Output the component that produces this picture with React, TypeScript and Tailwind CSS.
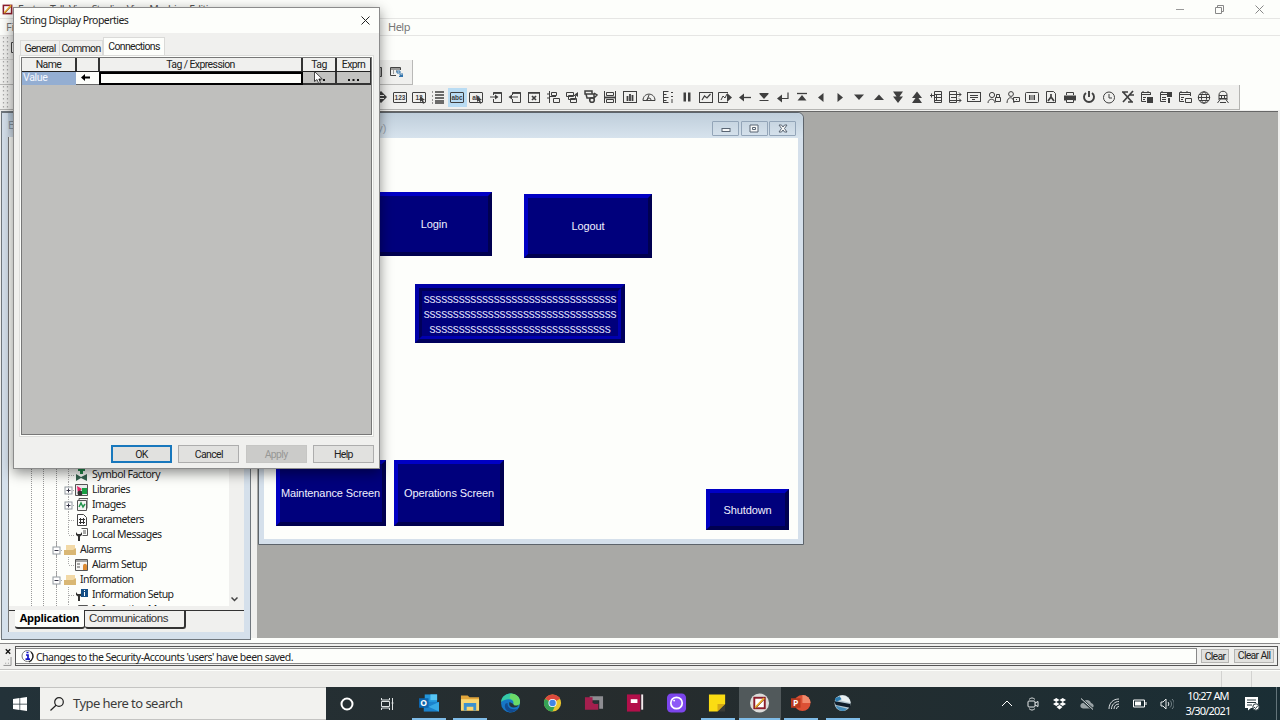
import React from 'react';

interface ToolIcon {
  name: string;
  active?: boolean;
  art: React.ReactNode;
}

const INK = '#3f3f3f';

const box = <rect x="0.5" y="2.5" width="13" height="10" rx="0.5" />;

const txt = (s: string) => (
  <text x="7" y="10" fontSize="6.5" fontWeight="bold" textAnchor="middle" fill={INK} stroke="none" fontFamily="Liberation Sans">
    {s}
  </text>
);

const solid = (d: string) => <path d={d} fill={INK} stroke="none" />;

const toolIcons: ToolIcon[] = [
  { name: 'diamond', art: solid('M7 1L13 7L7 13L1 7zM4 6h6v-1h-6zM4 9h6v-1h-6z') },
  { name: 'numeric', art: <>{box}{txt('123')}</> },
  { name: 'numeric-input', art: <>{box}{txt('12')}{solid('M8 6l5 4-2 .3 1.5 3-1.5.5-1.3-3L8 12z')}</> },
  { name: 'list', art: <><path d="M1 2h1M1 6h1M1 10h1M1 13h1" /><path d="M4 2h9M4 5h9M4 8h9M4 11h9M4 13h9" strokeWidth="1.6" /></> },
  { name: 'string', active: true, art: <>{box}{txt('abc')}</> },
  { name: 'string-input', art: <>{box}{txt('ab')}{solid('M8 6l5 4-2 .3 1.5 3-1.5.5-1.3-3L8 12z')}</> },
  { name: 'goto', art: <><path d="M4.5 5V2.5h8v10h-8V9M1 7h6" /><path d="M4.5 3h8" strokeWidth="1.8" />{solid('M6 4.5L9.5 7L6 9.5z')}</> },
  { name: 'return', art: <><path d="M4.5 5V2.5h8v10h-8V9M3 7h7" /><path d="M4.5 3h8" strokeWidth="1.8" />{solid('M4 4.5L.5 7L4 9.5z')}</> },
  { name: 'close', art: <><rect x="1.5" y="2.5" width="11" height="10" /><path d="M2 3h10M5 6l4 4M9 6l-4 4" strokeWidth="1.7" /></> },
  { name: 'list-goto', art: <><path d="M3.5 1v12M1 4h3M1 8h3M5.5 2.5h5v3h-5zM7.5 8.5h6v4h-6zM4 6.5h6" /></> },
  { name: 'screen-goto', art: <><path d="M1.5 2.5h7v4h-7zM3.5 5.5h7v4h-7zM5.5 8.5h6v4h-6z" />{solid('M13 2v5L9.5 4.5z')}</> },
  { name: 'screen-swap', art: <><path d="M1 1h7v3H1zM2 4h8v4H3zM10 3l3 2-3 3" strokeWidth="1.5" /><circle cx="8" cy="10" r="2.3" strokeWidth="1.6" /></> },
  { name: 'pump', art: <><path d="M1.5 1v12M12.5 1v12M3.5 2.5h7v3h-7zM3.5 9.5h7v3h-7z" /><path d="M2 7.500h10" strokeWidth="1.8" /></> },
  { name: 'bars', art: <><rect x="0.5" y="1.5" width="13" height="11" /><path d="M4.5 11V6M7 11V4M9.5 11V5" strokeWidth="1.8" /></> },
  { name: 'gauge', art: <path d="M1 10.5C1 2 13 2 13 10.5zM5 10l2-5M9 10a2 2 0 0 0-4 0" /> },
  { name: 'scale', art: <path d="M2.5 1v12M2.5 1.5h5M2.5 4.5h3M2.5 7.5h5M2.5 10.5h3M2.5 12.5h5M10 2.5h2M10 6.5h2M11 9v4" /> },
  { name: 'pause', art: solid('M3.5 2.5h2.5v9h-2.5zM8 2.5h2.5v9H8z') },
  { name: 'trend', art: <><rect x="0.5" y="2.5" width="13" height="10" /><path d="M3 10l2.5-4L8 8l3.5-4" strokeWidth="1.2" /></> },
  { name: 'trend-next', art: <><path d="M10 2.5H.5v10H10M3 10l2-4 2 2 2-4" />{solid('M9 3l5 4.500-5 4.500z')}</> },
  { name: 'arrow-left', art: <><path d="M5 7.5h8" strokeWidth="1.3" />{solid('M6 3.5v8L1 7.500z')}</> },
  { name: 'to-bottom', art: <>{solid('M2.5 4h9L7 9z')}<path d="M2.5 10.5h9M2.5 3.5h9" /></> },
  { name: 'enter', art: <><path d="M4 8.5h8V2.5" strokeWidth="1.2" />{solid('M6 4.500v8L1 8.500z')}</> },
  { name: 'to-top', art: <>{solid('M2.5 10.5h9L7 5z')}<path d="M2 3.5h10" strokeWidth="1.3" /></> },
  { name: 'left', art: solid('M9.5 3v9L4 7.5z') },
  { name: 'right', art: solid('M4.5 3v9L10 7.5z') },
  { name: 'down', art: solid('M2 4.5h10L7 10z') },
  { name: 'up', art: solid('M2 10h10L7 4.500z') },
  { name: 'page-down', art: solid('M2 1.5h10L8.5 6.5H12L7 13L2 6.5h3.5z') },
  { name: 'page-up', art: solid('M2 13h10L8.5 8H12L7 1.500L2 8h3.5z') },
  { name: 'recipe', art: <><path d="M5.5 1.5h7v11h-7zM6 4.500h6M6 7.500h6M6 10.500h6M1 5.500h4M2.500 3.500v4" /><path d="M7.5 4v7" /></> },
  { name: 'recipe-out', art: <path d="M1.5 1.5h7v11h-7zM2 4.500h11M3 7.500h5M2 10.500h11M11 2.500l2 2-2 2M11 8.500l2 2-2 2" /> },
  { name: 'message', art: <><rect x="0.5" y="2.5" width="13" height="9" /><path d="M3 5.500h8M3 7.500h8M5 9.500h3" /></> },
  { name: 'user-lock', art: <><circle cx="5" cy="5" r="2.6" /><path d="M1 13c0-5 7-5 7 0M8.500 7.500h5v4h-5zM9.500 7V4.5h3V7" /></> },
  { name: 'user-key', art: <><circle cx="5" cy="4" r="2.4" /><path d="M1 13c0-7 7-7 7 0M7.500 7.500h6v4h-6zM10 9.500h1" /></> },
  { name: 'display', art: <><rect x="0.5" y="2.5" width="13" height="10" rx="1" /><path d="M4.5 5v5M6 5v5M8 5v5M9.5 5v5" /></> },
  { name: 'report', art: <><path d="M2.5 1.5h7l2 2v9h-9z" /><path d="M7 4v3M4 11l3-4 3 4" strokeWidth="1.7" /></> },
  { name: 'print', art: <>{solid('M1 5.5h12v5H1z')}<path d="M3.5 5V2.5h7V5M3.5 9.5h7v3h-7z" fill="#eeeeec" /></> },
  { name: 'power', art: <path d="M4 3a5 5 0 1 0 6 0M7 1v6" strokeWidth="1.9" /> },
  { name: 'clock', art: <><circle cx="7" cy="7.500" r="5.5" /><path d="M7 4V8h3" /></> },
  { name: 'language', art: <path d="M2 2l9 10M12 1L2 12M1 2h6M8 5h5M7 12h5" strokeWidth="1.7" /> },
  { name: 'tag-a', art: <><path d="M10.500 5V2.5h-9v9H6M2 4.5h9M3 1v2M8 1v2M3 7.500h3M3 9.500h2" />{solid('M7 7h6v6H7z')}</> },
  { name: 'tag-b', art: <><path d="M9 2.5H1.5v9H7M2 4.5h7M3 1v2M3 7.500h4M3 9.500h4" />{solid('M8 2h5v5H8zM9 8h2v5H9z')}</> },
  { name: 'tag-c', art: <path d="M12.500 6V2.5h-11v9H6M2 4.5h10M3 1v2M9 1v2M3 7.500h3M3 9.500h2M7.500 8.500h6v4h-6z" /> },
  { name: 'globe', art: <><circle cx="7" cy="7.500" r="5.7" /><ellipse cx="7" cy="7.500" rx="2.6" ry="5.7" /><path d="M1 7.500h12M2 4.500h10M2 10.500h10" /></> },
  { name: 'robot', art: <path d="M3 10V5C3 0 11 0 11 5v5M3 5.500h8M3 8.500h8M5.500 5v3M8.500 5v3M1.5 13l3-4h5l3 4M4 12.500h6" /> },
];

const Tool = ({ icon }: { icon: ToolIcon }) => (
  <div className={`flex h-[19px] w-[19.17px] shrink-0 items-center justify-center ${icon.active ? 'bg-[#b9dcf3]' : ''}`}>
    <svg width="14" height="14" viewBox="0 0 14 14" fill="none" stroke={INK} strokeWidth="1">
      {icon.art}
    </svg>
  </div>
);

interface TreeItem {
  label: string;
  level: number;
  expand?: '+' | '-';
  last?: boolean;
  art: React.ReactNode;
}

const folder = (
  <>
    <path d="M3 2h9v9H3z" fill="#f2d9a6" />
    <path d="M1 12V7h9l3-2v7z" fill="#d9b774" />
  </>
);

const wrench = <path d="M1 4v3l2 1.5V13h2V8.5L7 7V4L5.5 6h-3z" fill="#333" />;

const treeItems: TreeItem[] = [
  { label: 'Symbol Factory', level: 1, art: <><path d="M3 1h7v2H8v3H5V3H3z" fill="#238a4c" /><path d="M1 6l5 3 6-3v7l-6-3-5 3z" fill="#356450" /></> },
  { label: 'Libraries', level: 1, expand: '+', art: <><path d="M.5 1.5h12v11H.5z" fill="#e9eeee" stroke="#555" /><path d="M2 3l5 3-4 4z" fill="#e52468" /><circle cx="5" cy="10" r="2.5" fill="#333" /><path d="M7 5h5v6H7z" fill="#19a044" /></> },
  { label: 'Images', level: 1, expand: '+', art: <><path d="M2.5 2.5h9v10h-9zM4 2V.5h9v10" fill="#f5f5f3" stroke="#555" /><path d="M4 9l2-4 2 4 2-3" fill="none" stroke="#21944c" strokeWidth="1.5" /></> },
  { label: 'Parameters', level: 1, art: <><path d="M2.5 1.5h6l3 3v8h-9z" fill="#fff" stroke="#444" /><path d="M4 6.500h6M4 9.500h6M5.500 5v6M8.5 5v6" stroke="#333" /></> },
  { label: 'Local Messages', level: 1, last: true, art: <>{wrench}<path d="M6.5.5h6v7h-5M8 3h3M8 5h3" fill="none" stroke="#555" /></> },
  { label: 'Alarms', level: 0, expand: '-', art: folder },
  { label: 'Alarm Setup', level: 1, last: true, art: <><path d="M.5 1.5h12v11H.5zM.5 3h12M2 6h3M2 9h3" fill="#f7f7f5" stroke="#555" /><path d="M8 12V8c0-3 4-3 4 0v4z" fill="#dc8a32" /></> },
  { label: 'Information', level: 0, expand: '-', art: folder },
  { label: 'Information Setup', level: 1, art: <>{wrench}<path d="M6 1h7v8H6z" fill="#154f86" /><path d="M9.5 2v1M9.5 4v4" stroke="#fff" /></> },
  { label: 'Information Messages', level: 1, art: <path d="M3.5 2.5h9v10h-9zM5 5h6" fill="none" stroke="#555" /> },
];

const TreeRow = ({ item }: { item: TreeItem }) => (
  <div className={`flex h-[15px] shrink-0 items-center ${item.level === 1 ? 'pl-[53px]' : 'pl-[41px]'}`}>
    <svg width="13" height="15" viewBox="0 0 13 15" fill="none" stroke="#aaa" strokeWidth="1">
      <path d={item.level === 1 && item.last ? 'M6.5 0V8' : 'M6.5 0V15'} strokeDasharray="1 1" />
      <path d="M7 8.5h6" strokeDasharray="1 1" />
      {item.expand && (
        <>
          <rect x="3" y="5" width="7" height="7" fill="#fff" stroke="#92999f" />
          <path d={item.expand === '+' ? 'M4.5 8.5h4M6.5 6.5v4' : 'M4.5 8.5h4'} stroke="#334" />
        </>
      )}
    </svg>
    <svg width="13" height="13" viewBox="0 0 13 13" className="mr-[4px]">
      {item.art}
    </svg>
    <span className="text-[10.5px] leading-[15px] tracking-[-0.53px] whitespace-nowrap text-[#222]">{item.label}</span>
  </div>
);

const MdiButton = ({ children }: { children: React.ReactNode }) => (
  <div className="flex h-[15px] w-[27px] items-center justify-center rounded-[1px] border border-[#93a5b8]">
    <svg width="10" height="9" viewBox="0 0 10 9" fill="#f7f8f8" stroke="#596573">
      {children}
    </svg>
  </div>
);

const HmiButton = ({ label, className }: { label: string; className: string }) => (
  <div
    className={`absolute flex items-center justify-center border-4 border-t-[#0000c4] border-r-[#000050] border-b-[#000050] border-l-[#0000c4] bg-[#00007c] text-[11px] tracking-[-0.1px] whitespace-nowrap text-[#f0f0ff] ${className}`}
  >
    {label}
  </div>
);

const DisplayWindow = () => (
  <div className="absolute top-0 left-px flex h-[433px] w-[546px] flex-col rounded-t-md border border-[#5d646b] bg-[#d5e0eb] px-[5px] pb-[5px] font-['Liberation_Sans',sans-serif]">
    <div className="-mx-[5px] flex h-[25px] shrink-0 items-center justify-end gap-[1.5px] rounded-t-md bg-linear-to-b from-[#bfcedb] to-[#d7e3ed] pt-[6px] pr-[7px]">
      <span className="mr-[324px] text-[11px] text-[#96a1aa]">Logon - /Test/ (Display)</span>
      <MdiButton><rect x="1" y="4.5" width="8" height="3" /></MdiButton>
      <MdiButton><path d="M1 1h8v7H1z" /><path d="M3.5 3.5h3v2h-3z" /></MdiButton>
      <MdiButton><path d="M1 1h2.5L5 3l1.5-2H9L6.5 4.5 9 8H6.5L5 6 3.5 8H1l2.5-3.5z" /></MdiButton>
    </div>
    <div className="relative flex-1 bg-[#fdfefb]">
      <HmiButton label="Login" className="top-[54px] left-[112px] h-[64px] w-[116px]" />
      <HmiButton label="Logout" className="top-[56px] left-[260px] h-[64px] w-[128px]" />
      <div className="absolute top-[146px] left-[151px] h-[59px] w-[210px] border-4 border-t-[#0000a8] border-r-[#00005c] border-b-[#00005c] border-l-[#0000a8]">
        <div className="flex h-full flex-col justify-center border-3 border-t-[#000058] border-r-[#0000b0] border-b-[#0000b0] border-l-[#000058] bg-[#00007c] pt-[2px] text-center text-[12px] leading-[15px] tracking-[-0.16px] whitespace-nowrap text-[#e0e0fb]">
          <div className="-mx-2">{'s'.repeat(33)}</div>
          <div className="-mx-2">{'s'.repeat(33)}</div>
          <div className="-mx-2">{'s'.repeat(31)}</div>
        </div>
      </div>
      <HmiButton label="Maintenance Screen" className="top-[322px] left-[12px] h-[66px] w-[110px] pr-px" />
      <HmiButton label="Operations Screen" className="top-[322px] left-[130px] h-[66px] w-[110px]" />
      <HmiButton label="Shutdown" className="top-[351px] left-[442px] h-[41px] w-[83px] pt-px" />
    </div>
  </div>
);

const DialogButton = ({ label, className = '' }: { label: string; className?: string }) => (
  <button className={`h-[18px] w-[61px] border text-[10.5px] leading-[15px] ${className || 'border-[#adadad] bg-[#e1e1df]'}`}>
    {label}
  </button>
);

const Dots = () => (
  <svg width="11" height="2" viewBox="0 0 11 2" fill="#111"><path d="M0 0h2v2H0zM4.5 0h2v2h-2zM9 0h2v2H9z" /></svg>
);

const PropertiesDialog = () => (
  <div className="absolute top-[7px] left-[13px] flex h-[462px] w-[367px] flex-col border border-[#8b8b8b] bg-[#f0f0ee] font-[Roboto,sans-serif] tracking-[-0.65px] text-[#222] shadow-[0_4px_12px_rgba(0,0,0,0.45)]">
    <div className="flex h-[25px] items-center justify-between bg-[#fdfefb] pr-[9px] pl-[6px]">
      <span className="font-['Noto_Sans',sans-serif] text-[10.5px] tracking-[-0.54px]">String Display Properties</span>
      <svg width="9" height="9" viewBox="0 0 9 9" stroke="#222"><path d="M.5.5l8 8M8.5.5l-8 8" /></svg>
    </div>
    <div className="flex h-[22px] items-end pl-[6px] text-[10.5px] leading-[15px]">
      <div className="h-[15px] w-[40px] border border-b-0 border-[#dadad8] text-center">General</div>
      <div className="h-[15px] w-[43px] border border-b-0 border-l-0 border-[#dadad8] text-center">Common</div>
      <div className="h-[18px] w-[62px] border border-b-0 border-[#dadad8] bg-[#fdfefb] text-center leading-[18px]">Connections</div>
    </div>
    <div className="ml-[5px] h-[382px] w-[355px] border border-[#dcdcda] bg-[#fdfefb] p-px">
      <div className="h-full border border-[#777] bg-[#bfbfbd]">
        <div className="flex h-[14px] border-b border-[#222] bg-[#f0f0ee] text-center text-[10.5px] leading-[13px] tracking-[-0.6px]">
          <div className="w-[55px] border-r-2 border-[#333]">Name</div>
          <div className="w-[23px] border-r-2 border-[#333]" />
          <div className="w-[203px] border-r-2 border-[#333]">Tag / Expression</div>
          <div className="w-[34px] border-r-2 border-[#333]">Tag</div>
          <div className="w-[34px] border-r border-[#333]">Exprn</div>
        </div>
        <div className="flex h-[13px] text-[10.5px] leading-[12px]">
          <div className="w-[54px] bg-[#94aed2] pl-px tracking-[-0.3px] text-[#f5f8ff]">Value</div>
          <div className="flex w-[23px] items-center justify-center border-b border-[#666] bg-[#fdfefb] pr-[4px] pb-[2px]">
            <svg width="9" height="7" viewBox="0 0 9 7"><path d="M0 3.5L4 0v2.5h5v2H4V7z" fill="#000" /></svg>
          </div>
          <div className="w-[204px] border-2 border-black bg-[#fdfefb]" />
          <div className="flex w-[34px] items-center justify-center border-r-2 border-b-2 border-[#333] bg-[#c3c3c1] pt-1">
            <Dots />
          </div>
          <div className="flex w-[34px] items-center justify-center border-r border-b-2 border-[#333] bg-[#c3c3c1] pt-1">
            <Dots />
          </div>
        </div>
      </div>
    </div>
    <div className="flex gap-[6.3px] pt-[8px] pl-[97px]">
      <DialogButton label="OK" className="border-2 border-[#1878bd] bg-[#e1e1df] leading-[13px]" />
      <DialogButton label="Cancel" />
      <DialogButton label="Apply" className="border-[#c6c6c4] bg-[#cbcbc9] text-[#989896]" />
      <DialogButton label="Help" />
    </div>
  </div>
);

const StudioMark = ({ size }: { size: number }) => (
  <svg width={size} height={size} viewBox="0 0 12 12">
    <rect x="1.5" y="1.5" width="9" height="9" fill="#fff" stroke="#8c1e2c" strokeWidth="1.7" />
    <path d="M2.5 10L10 1.5" stroke="#e9ac2a" strokeWidth="1.9" />
    <path d="M2.5 10.5L10.5 2.5" stroke="#70302a" strokeWidth="0.5" />
  </svg>
);

interface TaskApp {
  name: string;
  open?: boolean;
  active?: boolean;
  art: React.ReactNode;
}

const letter = (s: string, x: number) => (
  <text x={x} y="13.5" fontSize="9" fontWeight="bold" textAnchor="middle" fill="#fff" fontFamily="Open Sans">{s}</text>
);

const taskApps: TaskApp[] = [
  { name: 'Outlook', open: true, art: <><path d="M6 1h13v11H6z" fill="#2397dc" /><path d="M12 1h7v6h-7z" fill="#57c5f4" /><path d="M5 9h16v10H5z" fill="#1b82cc" /><path d="M21 9v10L10 14z" fill="#36a9e6" /><path d="M0 5h10v10H0z" fill="#0d65ae" />{letter('O', 5)}</> },
  { name: 'Explorer', open: true, art: <><path d="M1 2h7l2 2h10v14H1z" fill="#e3a63b" /><path d="M1 6h19v12H1z" fill="#fad774" /><path d="M4 18v-8h13v8h-3v-4H7v4z" fill="#3d91cf" /></> },
  { name: 'Edge', art: <><circle cx="10" cy="10" r="10" fill="#1676c6" /><path d="M0 9C1-3 20-3 20 9c0 5-7 5-7 2 2-5-7-7-13-2z" fill="#35c9a5" /><path d="M10 0c6 0 10 4 10 9 0 5-7 5-7 2 1-3-1-5-4-6z" fill="#6bda68" /><path d="M7 10c-1 5 5 8 10 6-3 5-12 5-13-2 0-3 1-4 3-4z" fill="#124b91" /><path d="M9 9c-2 5 3 7 8 5l3-4c-2 4-7 3-7 1z" fill="#26343a" /></> },
  { name: 'Chrome', art: <><circle cx="10" cy="10" r="9" fill="#e9c42e" /><path d="M10 10L2.2 5.5A9 9 0 0 1 17.8 5.5z" fill="#dd4a3d" /><path d="M2.2 5.5A9 9 0 0 0 10 19l3-7z" fill="#35a255" /><path d="M10 5.5h8l-1-2H8z" fill="#dd4a3d" /><circle cx="10" cy="10" r="4.3" fill="#fff" /><circle cx="10" cy="10" r="3.4" fill="#4285e6" /></> },
  { name: 'Linx', art: <><path d="M6 3h14v13h-4V7H6z" fill="#8d8d92" /><path d="M1 4h8v6h6v7H1z" fill="#a41f4e" /><path d="M10 8h5v3h-5z" fill="#2a3337" /></> },
  { name: 'Logix', art: <><path d="M1 1h14v18H1z" fill="#b30f4a" /><path d="M16 1h2v16h-2z" fill="#f4e8ec" /><path d="M5 6h7v4H5z" fill="#fff" /></> },
  { name: 'Capture', art: <><rect width="20" height="20" rx="4.5" fill="#7c45ec" /><circle cx="10" cy="10" r="6" fill="#8e5af7" stroke="#fff" strokeWidth="1.8" /><circle cx="7.5" cy="7.5" r="1" fill="#fff" /></> },
  { name: 'Notes', open: true, art: <><path d="M1 1h17v10l-8 8H1z" fill="#fbdc13" /><path d="M18 11v8h-8z" fill="#3b3c36" /><path d="M10 11h8l-8 8z" fill="#d5a916" /></> },
  { name: 'Studio', open: true, active: true, art: <><circle cx="10" cy="10" r="10" fill="#dddcda" /><rect x="4.5" y="4.5" width="11" height="11" fill="#fff" stroke="#8c1e2c" strokeWidth="2" /><path d="M5.5 15L15 5" stroke="#e9ac2a" strokeWidth="2" /><path d="M6 15.5L15.5 6" stroke="#70302a" strokeWidth=".6" /></> },
  { name: 'PowerPoint', open: true, art: <><circle cx="12" cy="10" r="8.5" fill="#dc5034" /><path d="M12 1.5A8.5 8.5 0 0 1 20.5 10H12z" fill="#f18a6c" /><path d="M0 5h10v10H0z" fill="#b93a20" />{letter('P', 5)}</> },
  { name: 'Viewer', open: true, art: <><circle cx="10" cy="10" r="8.5" fill="#b4c5ce" /><path d="M3 5C9-1 18 3 18.5 10L10 8z" fill="#e9f0f2" /><path d="M1 8l17 3v4L3 12z" fill="#101d2a" /><path d="M3 13l12 3c-4 4-10 3-12-3z" fill="#468dba" /><path d="M2 5l5-2 2 3-6 3z" fill="#2e7eb1" /></> },
];

const Taskbar = () => (
  <div className="flex h-[33px] shrink-0 items-stretch bg-linear-to-r from-[#233239] via-[#262c2d] to-[#1a2e35] font-['Noto_Sans',sans-serif] text-white">
    <div className="flex w-[40px] items-center justify-center">
      <svg width="14" height="14" viewBox="0 0 14 14" fill="#fff"><path d="M0 2l6.5-1v5.7H0zM7.2.9L14 0v6.7H7.2zM0 7.4h6.5V13L0 12zM7.2 7.4H14V14l-6.8-.9z" /></svg>
    </div>
    <div className="flex w-[286px] items-center gap-[9px] border-t border-b border-[#c4c4c2] bg-[#f2f2ef] pl-[10px] text-[#3c3c3c]">
      <svg width="14" height="14" viewBox="0 0 14 14" fill="none" stroke="#222" strokeWidth="1.2"><circle cx="9" cy="5" r="4.3" /><path d="M6 8.2L.5 13.5" /></svg>
      <span className="text-[13px] tracking-[-0.54px]">Type here to search</span>
    </div>
    <div className="flex w-[41px] items-center justify-center">
      <svg width="14" height="14" viewBox="0 0 14 14" fill="none" stroke="#fff" strokeWidth="2"><circle cx="7" cy="7" r="5.5" /></svg>
    </div>
    <div className="flex w-[41px] items-center justify-center">
      <svg width="15" height="14" viewBox="0 0 15 14" fill="none" stroke="#dfe3e4"><path d="M1.5 1v2h8V1M1.5 13v-2h8v2M1.5 4.5h8v5h-8zM12.5 1v12M11.5 6h2" /></svg>
    </div>
    {taskApps.map((app) => (
      <div key={app.name} className={`flex w-[41.4px] items-center justify-center ${app.active ? 'bg-[#51595b]' : ''}`}>
        <div className="relative flex h-full w-[34px] items-center justify-center pb-px">
          <svg width="20" height="20" viewBox="0 0 21 20">{app.art}</svg>
          {app.open && <div className={`absolute bottom-0 h-[2px] bg-[#7fbce8] ${app.active ? 'w-[41px]' : 'w-[34px]'}`} />}
        </div>
      </div>
    ))}
    <div className="ml-auto flex items-center">
      <div className="flex w-[27px] justify-center">
        <svg width="12" height="7" viewBox="0 0 12 7" fill="none" stroke="#fff"><path d="M1 6l5-5 5 5" /></svg>
      </div>
      <div className="flex w-[26px] justify-center">
        <svg width="12" height="14" viewBox="0 0 12 14" fill="none" stroke="#e8ebec"><rect x="1" y="4" width="7" height="6" rx="1" /><path d="M8 6l3-1.5v5L8 8M2 2.5c2-2 4-2 6 0M2 11.5c2 2 4 2 6 0" /></svg>
      </div>
      <div className="flex w-[27px] justify-center">
        <svg width="13" height="12" viewBox="0 0 13 12" fill="#fff"><path d="M3.3 0L6.5 2 3.3 4 0 2zM9.7 0L13 2 9.7 4 6.5 2zM3.3 4L6.5 6 3.3 8 0 6zM9.7 4L13 6 9.7 8 6.5 6zM6.5 7l3 2-3 2.5-3-2.5z" /></svg>
      </div>
      <div className="flex w-[27px] justify-center">
        <svg width="14" height="12" viewBox="0 0 14 12"><path d="M3 10.5C-1 10 0 5 3 5c1-4 7-4 8 0 4 1 3 5.5 0 5.5z" fill="#9aa3a6" /><path d="M1 1l12 10.5" stroke="#1f2d32" strokeWidth="2.5" /><path d="M1 .5l12 11" stroke="#dfe4e5" /></svg>
      </div>
      <div className="flex w-[27px] justify-center">
        <svg width="12" height="12" viewBox="0 0 12 12" fill="none" stroke="#d9dddf"><path d="M1 11C1 5 5 1 11 1M3.5 11c0-4 3-7.5 7.5-7.5M6 11c0-3 2-5 5-5M8.5 11c0-1.5 1-2.5 2.5-2.5" /></svg>
      </div>
      <div className="flex w-[26px] justify-center">
        <svg width="14" height="9" viewBox="0 0 14 9" fill="none" stroke="#fff"><path d="M.5 1h11v7H.5zM13 3v3" /><path d="M2 2.5h6v4H2z" fill="#fff" stroke="none" /></svg>
      </div>
      <div className="flex w-[27px] justify-center">
        <svg width="14" height="12" viewBox="0 0 14 12" fill="none" stroke="#e8ebec"><path d="M1 4h2l3-3v10L3 8H1zM8 4c1 1 1 3 0 4" /><path d="M10 2.5c2 2 2 5 0 7M12 1c3 3 3 7 0 10" stroke="#77858a" /></svg>
      </div>
      <div className="ml-[3px] w-[50px] pb-[2px] text-center text-[11px] leading-[15px] tracking-[-0.8px] whitespace-nowrap">
        <div>10:27 AM</div>
        <div>3/30/2021</div>
      </div>
      <div className="flex w-[39px] justify-center">
        <svg width="15" height="14" viewBox="0 0 15 14"><path d="M0 0h13v11H6l-3 2.5V11H0z" fill="#fff" /><path d="M2 3h9M2 5.5h9M2 8h5" stroke="#2b3b41" /><circle cx="11" cy="10" r="3.2" fill="#fff" stroke="#2b3b41" /><path d="M9 10l1.5 1.5L13 8.5" fill="none" stroke="#2b3b41" /></svg>
      </div>
      <div className="ml-[4px] h-[33px] w-[4px] border-l border-[#63747a]" />
    </div>
  </div>
);

const Grip = () => (
  <svg width="8" height="22" viewBox="0 0 8 22" className="ml-[2px] shrink-0" fill="none" stroke="#aaa" strokeWidth="1.2">
    <path d="M1.5 0v22M5.5 0v22" strokeDasharray="1.5 2.5" />
  </svg>
);

const App: React.FC = () => {
  return (
    <div className="relative flex h-[720px] w-[1280px] flex-col overflow-hidden bg-[#fdfefb] font-['Noto_Sans',sans-serif] text-[11px] text-[#222]">
      {/* Title bar */}
      <div className="flex h-[19px] shrink-0 items-center border-b border-[#e6e6e4] pl-[2px]">
        <StudioMark size={11} />
        <span className="ml-[5px] pt-[2px] text-[10.5px] tracking-[-0.6px] text-[#555]">FactoryTalk View Studio - View Machine Edition</span>
        <div className="ml-auto flex items-center gap-[31px] pr-[16px]">
          <svg width="8" height="9" viewBox="0 0 8 9" stroke="#999"><path d="M0 4.5h8" /></svg>
          <svg width="9" height="9" viewBox="0 0 9 9" fill="none" stroke="#888"><path d="M.5 2.5h6v6h-6zM2.5 2V.5h6v6H7" /></svg>
          <svg width="9" height="9" viewBox="0 0 9 9" stroke="#888"><path d="M.5.5l8 8M8.5.5l-8 8" /></svg>
        </div>
      </div>

      {/* Menu bar */}
      <div className="flex h-[17px] shrink-0 items-center border-b border-[#e6e6e4] pl-[6px] text-[#777]">
        <span className="w-[382px] tracking-[-0.3px]">File</span>
        <span className="tracking-[-0.5px]">Help</span>
      </div>

      {/* Toolbars */}
      <div className="flex h-[24px] w-[300px] shrink-0 items-center border-b border-[#d6d6d4] bg-[#f0f0ee]">
        <Grip />
        <svg width="10" height="11" viewBox="0 0 10 11" className="ml-px"><path d="M.5.5h9v10h-9z" fill="#fff" stroke="#444" /><path d="M3 4h6v4H3z" fill="#b52c3d" /></svg>
      </div>
      <div className="flex h-[25px] w-[413px] shrink-0 items-center border-r border-b border-[#b9b9b7] bg-[#f0f0ee]">
        <Grip />
        <div className="ml-auto flex items-center gap-[8px] pr-[9px]">
          <svg width="12" height="12" viewBox="0 0 12 12" fill="#aaa" stroke="#444"><path d="M.5 1.5h11v9H.5z" /></svg>
          <svg width="13" height="12" viewBox="0 0 13 12" fill="none" stroke="#444">
            <path d="M10.5 4V1.5h-10v8H6M1 3h9M3 5h1M6 5h1M3 7h1" />
            <path d="M7 5h3v2H7zM10 8h3v1.5h-3zM9 10.5h4" stroke="#3374ac" />
          </svg>
        </div>
      </div>
      <div className="flex h-[25px] w-[1240px] shrink-0 items-center border-r border-b border-[#b4b4b2] bg-[#f0f0ee]">
        <Grip />
        <div className="ml-[361px] flex">
          {toolIcons.map((icon) => (
            <Tool key={icon.name} icon={icon} />
          ))}
        </div>
      </div>

      {/* Explorer and workspace */}
      <div className="flex h-[528px] shrink-0 bg-[#f0f0ee] pt-px">
        <div className="-mb-[2px] ml-px flex w-[250px] flex-col border border-t-2 border-[#70777d] bg-[#d5e0eb] px-[6px] pb-[7px]">
          <div className="flex h-[24px] shrink-0 items-center bg-linear-to-b from-[#b8c9d9] to-[#d5e0eb] text-[#83909b]">Explorer - Test</div>
          <div className="flex min-h-0 flex-1 flex-col border-l border-[#777] bg-[#f0f0ee]">
            <div className="mb-[4px] flex h-[469px] shrink-0 overflow-hidden">
              <div className="relative flex w-[220px] flex-col justify-end bg-[#fdfefb]">
                <svg width="60" height="472" viewBox="0 0 60 472" className="absolute top-0 left-0" fill="none" stroke="#999">
                  <path d="M22.5 0v472M34.5 0v472M47.5 0v472" strokeDasharray="1 1" />
                </svg>
                <div className="relative -mb-[11px] flex flex-col">
                  {treeItems.map((item) => (
                    <TreeRow key={item.label} item={item} />
                  ))}
                </div>
              </div>
              <div className="flex w-[12px] flex-1 items-end justify-start bg-[#f0f0ee] pb-[4px] pl-[2px]">
                <svg width="7" height="5" viewBox="0 0 7 5" fill="none" stroke="#444" strokeWidth="1.5"><path d="M.5.5l3 3 3-3" /></svg>
              </div>
            </div>
            <div className="flex h-[20px] shrink-0 border-t border-[#333] pl-[6px]">
              <div className="-mt-px flex h-[19px] w-[70px] items-center justify-center rounded-b-[3px] border-r border-b-2 border-[#333] bg-[#fdfefb] font-['Open_Sans',sans-serif] text-[11px] font-bold tracking-[-0.3px] text-black">
                Application
              </div>
              <div className="flex h-[18px] w-[101px] items-center rounded-b-[3px] border-r-2 border-b-2 border-[#333] pl-[4px] font-['Liberation_Sans',sans-serif] text-[11.5px] tracking-[-0.48px] text-[#333]">
                Communications
              </div>
            </div>
          </div>
        </div>
        <div className="w-[6px]" />
        <div className="relative w-[1021px] border-t border-[#666] bg-[#a9a9a6]">
          <DisplayWindow />
        </div>
      </div>

      {/* Diagnostics list */}
      <div className="flex h-[32px] shrink-0 flex-col pt-[5px]">
        <div className="flex h-[27px] border-t border-b border-t-[#888] border-b-[#c5c5c3] bg-[#f0f0ee] pt-[2px] pb-[3px]">
          <div className="flex w-[15px] flex-col items-center gap-[2px] pt-[2px]">
            <svg width="8" height="8" viewBox="0 0 8 8" stroke="#111" strokeWidth="1.5"><path d="M1.5 1.5l5 5M6.5 1.5l-5 5" /></svg>
            <svg width="9" height="10" viewBox="0 0 9 10" fill="none" stroke="#888"><path d="M8.5 0v9.5H0M2 7h1M5 7h1M5 3h1" /></svg>
          </div>
          <div className="flex w-[1263px] items-center border border-[#555] bg-[#f0f0ee] pr-[3px]">
            <div className="flex h-[16px] flex-1 items-center border-t border-r border-b border-[#888] bg-[#fdfefb] pl-[5px]">
              <svg width="13" height="13" viewBox="0 0 13 13">
                <circle cx="6.5" cy="6" r="5.5" fill="#fff" stroke="#777" />
                <path d="M10 2c4 4 1 9-2 10" fill="none" stroke="#222" strokeWidth="1.3" />
                <path d="M5 5h2v4M4.5 9.2h4.5M5.5 2.5h2" fill="none" stroke="#1515c8" strokeWidth="1.7" />
              </svg>
              <span className="ml-[2px] pt-[2px] text-[10.5px] leading-[14px] tracking-[-0.53px]">Changes to the Security-Accounts 'users' have been saved.</span>
            </div>
            <div className="ml-[4px] flex gap-[5px] font-[Roboto,sans-serif] text-[10.5px] tracking-[-0.7px]">
              <button className="h-[14px] w-[28px] border border-[#b4b4b2] bg-[#e1e1df] leading-[13px] whitespace-nowrap">Clear</button>
              <button className="flex h-[14px] w-[40px] items-center justify-center border border-[#b4b4b2] bg-[#e1e1df] leading-[12px] whitespace-nowrap">Clear All</button>
            </div>
          </div>
        </div>
      </div>

      {/* Status bar */}
      <div className="flex h-[17px] shrink-0 justify-end border-t border-[#fdfefb] bg-[#eeeeeb]">
        <div className="w-[30px] border-l border-[#d2d2d0]" />
        <div className="w-[29px] border-l border-[#d2d2d0]" />
      </div>

      <Taskbar />
      <PropertiesDialog />

      {/* Mouse pointer over the tag browse button */}
      <svg width="9" height="13" viewBox="0 0 9 13" className="absolute top-[71px] left-[314px]">
        <path d="M.5.5v10l2.5-2 1.7 4 1.8-.8-1.7-3.7h3.5z" fill="#fff" stroke="#222" strokeWidth=".8" />
      </svg>
    </div>
  );
};

export default App;
